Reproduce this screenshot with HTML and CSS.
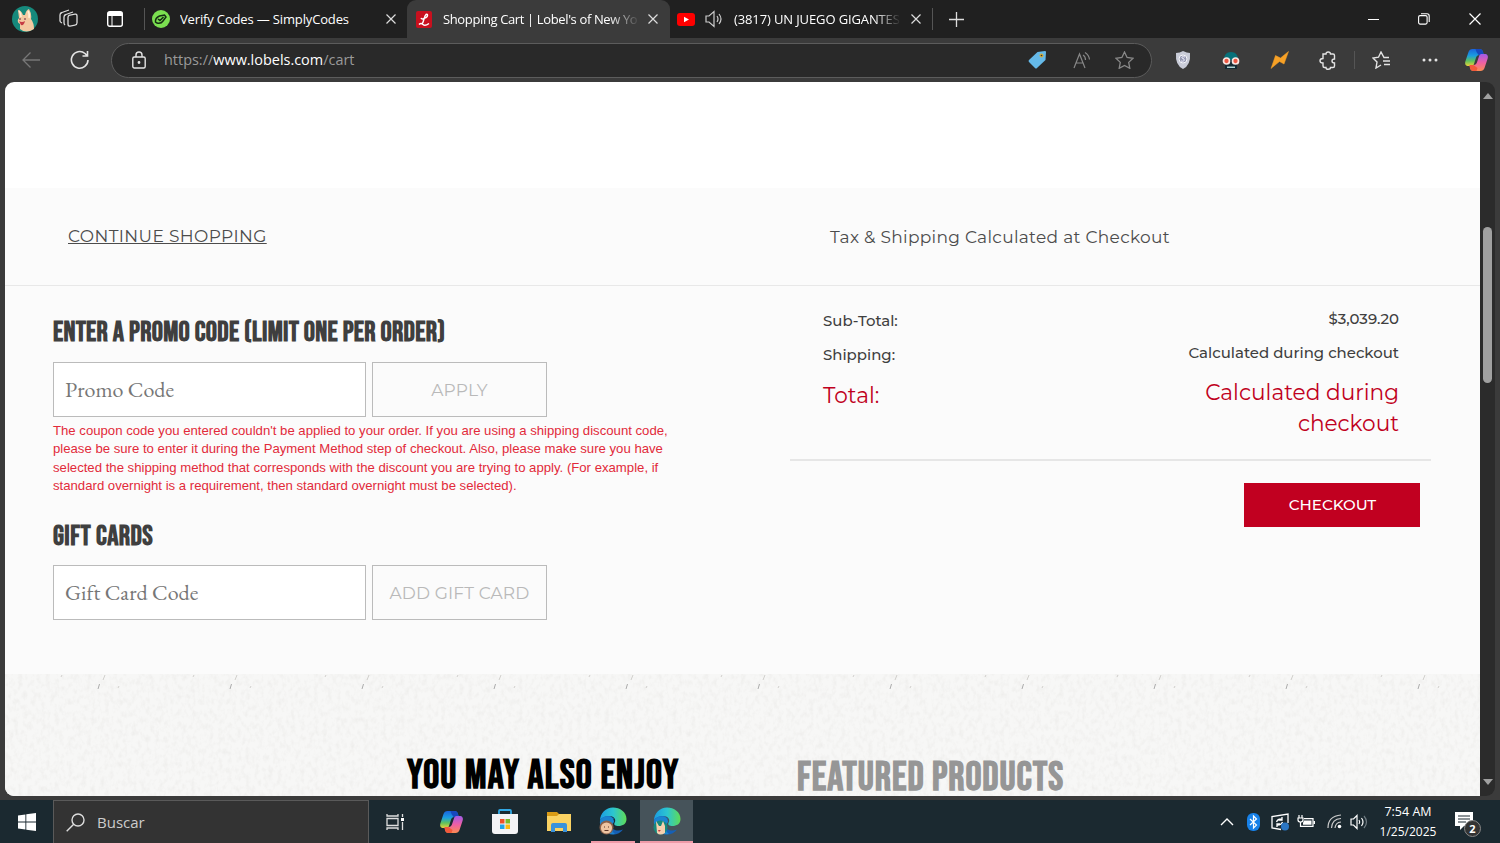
FILE: index.html
```html
<!DOCTYPE html>
<html lang="es">
<head>
  <meta charset="UTF-8" />
  <title>Shopping Cart | Lobel's of New York</title>
  <link rel="stylesheet" href="styles.css">
</head>
<body>

  <!-- Shared colours and logos -->
  <svg class="defs" width="0" height="0">
    <defs>
      <linearGradient id="gLeft" x1="0" y1="0" x2="0" y2="1">
        <stop offset="0" stop-color="#1a63dc"/><stop offset=".4" stop-color="#1a9ee0"/><stop offset=".7" stop-color="#5fc15c"/><stop offset="1" stop-color="#e8d23a"/>
      </linearGradient>
      <linearGradient id="gRight" x1="0" y1="0" x2="0" y2="1">
        <stop offset="0" stop-color="#a05be8"/><stop offset=".5" stop-color="#ee5fa5"/><stop offset="1" stop-color="#fb8b52"/>
      </linearGradient>
      <linearGradient id="gEdge" x1="0" y1="0" x2="1" y2="0">
        <stop offset="0" stop-color="#1b9de2"/><stop offset=".5" stop-color="#2cc5d0"/><stop offset="1" stop-color="#5fdc55"/>
      </linearGradient>
      <symbol id="copilot" viewBox="0 0 24 24">
        <path d="M8 1h7c2 0 3 1 3.500 3l.8 3H15c-2 0-3 1-3.600 3L9.500 16c-.6 1.500-1.500 2-3 2H4c-3 0-4-2-3-5L4 4c.7-2 2-3 4-3z" fill="url(#gLeft)"/>
        <path d="M11 1h4c2 0 3 1 3.500 3l.8 3H14L12 4z" fill="#1748bd"/>
        <path d="M16 23H9c-2 0-3-1-3.500-3L5 17h4c2 0 3-1 3.600-3l2-6c.5-1.500 1.400-2 3-2H20c3 0 4 2 3 5l-3 9c-.7 2-2 3-4 3z" fill="url(#gRight)"/>
        <path d="M12 23H9c-2 0-3-1-3.500-3L5 17h4l4 3z" fill="#f2593b"/>
      </symbol>
      <symbol id="edge" viewBox="0 0 28 28">
        <path d="M1 15c0 8 6 12.500 13 12.500 4 0 8-2 10-5-5 2-11 1-12-4-1-4 2-6 3-7L8 7C3 8 1 12 1 15z" fill="#1660b5"/>
        <path d="M1 14C1 6 7 .5 14 .5S27.500 5 27.500 12c0 5-4 7-8 7-3 0-5-1-4-3 2-3 0-7-5-7-5 0-9 2-9.500 5z" fill="url(#gEdge)"/>
        <path d="M1 14c2-6 14-7 14 1-3 3-4 8 1 12C7 29 0 22 1 14z" fill="#1b83d0"/>
      </symbol>
    </defs>
  </svg>

  <div class="tabbar">
    <svg class="avatar" width="26" height="26" viewBox="0 0 26 26">
      <circle cx="13" cy="13" r="13" fill="#16897c"/>
      <path d="M7 12 6 4q3 0 5 5h2q1-5 4-6 3 5 2 10 3 4 3 10-8 5-14 0v-5q-4-2-1-6z" fill="#f4c9a1"/>
      <path d="M7 5q2 2 2 6M16 5q2 3 1 7" stroke="#fff0da" stroke-width="1.500" fill="none"/>
      <path d="M7 15q3 2 6 0-1 5-4 4z" fill="#c63c45"/><circle cx="8" cy="13" r=".8" fill="#513"/><circle cx="13" cy="13" r=".8" fill="#513"/>
    </svg>
    <svg class="workspaces" width="20" height="20" viewBox="0 0 20 20" fill="none" stroke="#ddd" stroke-width="1.300">
      <rect x="9" y="6" width="9" height="11" rx="2" transform="skewY(-10) translate(0 2)"/>
      <path d="M6 16q-1-1-1-2V8q0-2 2-2.500L14 3M3 14q-2-1-2-2V6q0-2 2-2.500L10 1"/>
    </svg>
    <svg class="vertical-tabs" width="16" height="16" viewBox="0 0 16 16"><rect x=".7" y=".7" width="14.600" height="14.600" rx="2" fill="none" stroke="#fff" stroke-width="1.400"/><path d="M1 1h14v4H1z" fill="#fff"/><path d="M5 5v10" stroke="#fff"/></svg>
    <i class="divider"></i>
    <div class="tab tab-codes">
      <svg width="18" height="18" viewBox="0 0 18 18"><circle cx="9" cy="9" r="9" fill="#7be050"/><path d="M3.500 12q-.5-4 4-6l5-1 1.500 2-3 4q-2 3-6 2zM6 9l2 1.500L11.500 7" fill="none" stroke="#152c13" stroke-width="1.500"/></svg>
      <span class="tab-title">Verify Codes — SimplyCodes</span>
      <svg class="close" width="10" height="10"><path d="m.5.5 9 9m0-9-9 9"/></svg>
    </div>
    <div class="tab tab-cart">
      <svg width="16" height="17" viewBox="0 0 16 17"><rect width="16" height="17" rx="2" fill="#c8101e"/><path d="M3 13.500q2-2 4 0t6-1M6 13c2-2 2-8 4-9.500 2-1 2 2 0 3S6 9 5 7" fill="none" stroke="#fff" stroke-width="1.500"/></svg>
      <span class="tab-title fade">Shopping Cart | Lobel's of New Yo</span>
      <svg class="close" width="10" height="10"><path d="m.5.5 9 9m0-9-9 9"/></svg>
    </div>
    <div class="tab tab-video">
      <svg width="18" height="13" viewBox="0 0 18 13"><rect width="18" height="13" rx="3" fill="#f00"/><path d="m7 3.800 5 2.700-5 2.700z" fill="#fff"/></svg>
      <svg class="sound" width="18" height="18" viewBox="0 0 18 18" fill="none" stroke="#ccc" stroke-width="1.200"><path d="M1 6h3l5-4.500v15L4 12H1zM12 6q2 3 0 6M14 4q4 5 0 10"/></svg>
      <span class="tab-title fade">(3817) UN JUEGO GIGANTES</span>
      <svg class="close" width="10" height="10"><path d="m.5.5 9 9m0-9-9 9"/></svg>
    </div>
    <i class="divider"></i>
    <svg class="new-tab" width="15" height="15"><path d="M7.500 0v15M0 7.500h15" stroke="#ddd" stroke-width="1.300"/></svg>
    <div class="window-buttons">
      <svg width="11" height="12"><path d="M0 6.500h11" stroke="#fff"/></svg>
      <svg width="12" height="12" viewBox="0 0 12 12" fill="none" stroke="#fff" stroke-width="1.100"><rect x=".6" y="2.600" width="8.500" height="8.500" rx="1.500"/><path d="M3 .7h6q2.200 0 2.200 2.200V9"/></svg>
      <svg width="12" height="12"><path d="m.5.5 11 11m0-11-11 11" stroke="#fff" stroke-width="1.200"/></svg>
    </div>
  </div>

  <div class="toolbar">
    <svg class="back" width="18" height="16" viewBox="0 0 18 16" fill="none" stroke="#777" stroke-width="1.300"><path d="M18 8H1m7.500-7.500L1 8l7.500 7.500"/></svg>
    <svg class="reload" width="20" height="20" viewBox="0 0 20 20" fill="none" stroke="#e4e4e4" stroke-width="1.600"><path d="M18 10a8.300 8.300 0 1 1-3-6.500L17 5.500M17.500 1v5h-5"/></svg>
    <div class="address">
      <svg class="lock" width="14" height="18" viewBox="0 0 14 18" fill="none" stroke="#e4e4e4" stroke-width="1.400"><rect x=".8" y="6" width="12.400" height="11" rx="1.500"/><path d="M4 6V4q0-3 3-3t3 3v2"/><circle cx="7" cy="11.500" r=".7" fill="#fff"/></svg>
      <span class="url">https://<b>www.lobels.com</b>/cart</span>
      <svg class="tag" width="18" height="18" viewBox="0 0 18 18"><path d="M9.500 1 17 0q1 0 1 1l-.5 8L9 17q-1 1-2 0L1 11q-1-1 0-2z" fill="#65b9e8"/><circle cx="13.500" cy="4.500" r="2" fill="#d3ac3b"/><circle cx="13.500" cy="4.500" r=".8" fill="#333"/></svg>
      <svg class="read" width="18" height="17" viewBox="0 0 18 17" fill="none" stroke="#888" stroke-width="1.200"><path d="m1 16 5.500-14L12 16M3 11h7M10 3q2.500 1.500 2.500 5M12 .5q4 2.500 4.500 7"/></svg>
      <svg class="star" width="19" height="18" viewBox="0 0 19 18" fill="none" stroke="#888" stroke-width="1.300"><path d="m9.500 1 2.600 5.500 5.900.8-4.300 4.100 1.100 5.900-5.300-2.900-5.300 2.900 1.100-5.900L1 7.300l5.900-.8z"/></svg>
    </div>
    <div class="extensions">
      <svg class="shield" width="16" height="18" viewBox="0 0 16 18"><path d="M8 0q4 2 7 2 1 12-7 16Q0 14 1 2q4 0 7-2z" fill="#c9ccd8"/><circle cx="8" cy="8" r="4" fill="#9599b0" stroke="#f5f5fa"/><path d="M10 6q-4-1-3 1l2 1q1 3-3 2" fill="none" stroke="#eef" stroke-width="1"/></svg>
      <svg class="goggles" width="18" height="17" viewBox="0 0 18 17"><path d="M2 8Q2 0 9 0t7 8z" fill="#08717a"/><path d="M3 8h12v9H3z" fill="#132a34"/><path d="M5 14.500h8v1.500H5z" fill="#adced0"/><circle cx="4.500" cy="9" r="3" fill="#ec5743" stroke="#f8e6e2" stroke-width="1.700"/><circle cx="13.500" cy="9" r="3" fill="#ec5743" stroke="#f8e6e2" stroke-width="1.700"/></svg>
      <svg class="bolt" width="20" height="18" viewBox="0 0 20 18"><path d="M1 17.500 5.500 4.500l5 2.500L18.500.5 14 13l-4.500-2.500z" fill="#f7a126" stroke="#f7a126" stroke-width=".5"/></svg>
      <svg class="puzzle" width="18" height="19" viewBox="0 0 18 19" fill="none" stroke="#e4e4e4" stroke-width="1.400"><path d="M4 3h3q0-2 2.200-2t2.300 2H14q1.500 0 1.500 1.500V8q-2.500 0-2.500 2t2.500 2v3q0 1.500-1.500 1.500h-2.500q0 1.800-2.300 1.800T7 16.500H5.500Q4 16.500 4 15v-3q-3 0-3-2.200t3-2.300z"/></svg>
      <i class="divider"></i>
      <svg class="favs" width="19" height="18" viewBox="0 0 19 18" fill="none" stroke="#e4e4e4" stroke-width="1.400"><path d="M17 6.500h-5L9 1 6.500 6.200 1 7l4 4-1 6 5-3M11 10h7M12 13.500h6"/></svg>
      <svg class="dots" width="16" height="4" fill="#e4e4e4"><circle cx="2" cy="2" r="1.500"/><circle cx="8" cy="2" r="1.500"/><circle cx="14" cy="2" r="1.500"/></svg>
      <svg class="side" width="25" height="24"><use href="#copilot"/></svg>
    </div>
  </div>

  <div class="viewport">
    <main class="page">
      <div class="cart-top">
        <a class="continue">CONTINUE SHOPPING</a>
        <p class="tax">Tax &amp; Shipping Calculated at Checkout</p>
      </div>
      <div class="cart-body">
        <section class="codes">
          <h2>ENTER A PROMO CODE (LIMIT ONE PER ORDER)</h2>
          <div class="code-row">
            <div class="field">Promo Code</div>
            <div class="code-btn">APPLY</div>
          </div>
          <p class="error">The coupon code you entered couldn't be applied to your order. If you are using a shipping discount code,<br>please be sure to enter it during the Payment Method step of checkout. Also, please make sure you have<br>selected the shipping method that corresponds with the discount you are trying to apply. (For example, if<br>standard overnight is a requirement, then standard overnight must be selected).</p>
          <h2 class="gift-title">GIFT CARDS</h2>
          <div class="code-row">
            <div class="field">Gift Card Code</div>
            <div class="code-btn gift-btn">ADD GIFT CARD</div>
          </div>
        </section>
        <section class="summary">
          <div class="line"><span>Sub-Total:</span><span class="value">$3,039.20</span></div>
          <div class="line"><span>Shipping:</span><span class="value">Calculated during checkout</span></div>
          <div class="line total"><span>Total:</span><span class="value">Calculated during<br>checkout</span></div>
          <div class="checkout-row"><div class="checkout">CHECKOUT</div></div>
        </section>
      </div>
      <div class="products">
        <svg class="texture" width="1475" height="122">
          <filter id="grain" x="0" y="0" width="1" height="1"><feTurbulence type="fractalNoise" baseFrequency=".22 .16" numOctaves="3" seed="4"/><feColorMatrix values="0 0 0 0 .55  0 0 0 0 .53  0 0 0 0 .5  .35 0 0 0 -.15"/></filter>
          <pattern id="plaster" width="132" height="122" patternUnits="userSpaceOnUse">
            <path d="m93 15 1.500-5" stroke="#aaa" fill="none"/><path d="m56 3 1-2M98 6l2-5M113 14l1-2" stroke="#d0cecb" fill="none"/>
          </pattern>
          <rect width="1475" height="122" filter="url(#grain)"/>
          <rect width="1475" height="122" fill="url(#plaster)"/>
        </svg>
        <h3 class="enjoy">YOU MAY ALSO ENJOY</h3>
        <h3 class="featured">FEATURED PRODUCTS</h3>
      </div>
    </main>
    <div class="scrollbar">
      <svg width="10" height="6"><path d="M0 6 5 0l5 6z" fill="#a0a0a0"/></svg>
      <div class="thumb"></div>
      <svg class="down" width="10" height="6"><path d="m0 0 5 6 5-6z" fill="#a0a0a0"/></svg>
    </div>
  </div>

  <div class="taskbar">
    <div class="start"><svg width="18" height="18" viewBox="0 0 18 18" fill="#fff"><path d="m0 2.500 7.400-1v7.100H0zM8.300 1.300 18 0v8.600H8.300zM0 9.500h7.400v7.100l-7.400-1zM8.300 9.500H18V18l-9.700-1.300z"/></svg></div>
    <div class="search">
      <svg width="19" height="19" viewBox="0 0 19 19" fill="none" stroke="#ddd" stroke-width="1.400"><circle cx="12" cy="7" r="6"/><path d="m7.700 11.300-7 7"/></svg>
      <span>Buscar</span>
    </div>
    <div class="app task-view"><svg width="19" height="18" viewBox="0 0 19 18" fill="none" stroke="#ddd" stroke-width="1.300"><path d="M1 1v2h11V1M1 17v-2h11v2M1 5.500h11v7H1zM16.500 1v3M16.500 9v8"/><path d="M15 5h3v3h-3z" fill="#fff" stroke="none"/></svg></div>
    <div class="app copilot"><svg width="25" height="24"><use href="#copilot"/></svg></div>
    <div class="app store"><svg width="26" height="26" viewBox="0 0 26 26"><path d="M7 6V2q0-1 1-1h10q1 0 1 1v4" fill="none" stroke="#31a8e5" stroke-width="1.800"/><path d="M0 5h26v17q0 3-3 3H3q-3 0-3-3z" fill="#f3f3f5"/><path d="M8 10h4.500v4.500H8z" fill="#ee4f2a"/><path d="M13.500 10H18v4.500h-4.500z" fill="#7cb928"/><path d="M8 15.500h4.500V20H8z" fill="#21a3e8"/><path d="M13.500 15.500H18V20h-4.500z" fill="#fbb914"/></svg></div>
    <div class="app files"><svg width="24" height="20" viewBox="0 0 24 20"><path d="M0 0h10l2 2v4H0z" fill="#d99b16"/><path d="M0 4h10l2-2h12v17H0z" fill="#fad263"/><path d="M4 20v-7q0-2 2-2h12q2 0 2 2v7h-4v-4H8v4z" fill="#3a92dc"/></svg></div>
    <div class="app open edge-one"><svg width="28" height="28" viewBox="0 0 28 28"><use href="#edge"/><circle cx="7.500" cy="20.500" r="7" fill="#8a604a"/><circle cx="7.500" cy="21" r="5.600" fill="#eec4a2"/><path d="M5 20h1m3 0h1M5.500 23.500h4" stroke="#5b3427"/></svg></div>
    <div class="app open active"><svg width="28" height="28" viewBox="0 0 28 28"><use href="#edge"/><circle cx="7.500" cy="20.500" r="7" fill="#16897c"/><path d="m3 14 3 5h2l2-5 2 5v7q-5 3-8 0z" fill="#f6d0ae"/><path d="m5 23 3 0-2 2z" fill="#c63c45"/></svg></div>
    <div class="tray">
      <svg class="up" width="14" height="8"><path d="m1 7 6-6 6 6" fill="none" stroke="#fff" stroke-width="1.400"/></svg>
      <svg class="bt" width="13" height="18" viewBox="0 0 13 18"><rect width="13" height="18" rx="6" fill="#1781e8"/><path d="m3 6 6.500 6L6.500 15V3l3 3L3 12" fill="none" stroke="#fff" stroke-width="1.200"/></svg>
      <svg class="sync" width="19" height="18" viewBox="0 0 19 18" fill="none" stroke="#fff" stroke-width="1.300"><path d="M10 16.500 1 15V3.500L17 1v9M5.500 9q1-3 5-3M11 4v3H8M11.500 9q-1 3-5 3M6 14v-3h3"/><circle cx="14" cy="13.500" r="4" fill="#2b76c4" stroke="none"/></svg>
      <svg class="battery" width="18" height="13" viewBox="0 0 18 13" fill="none" stroke="#fff" stroke-width="1.200"><path d="M2 0v3m3-3v3M1 3h5v2q0 2-2.500 2T1 5zM3.500 7v4.400H16V3.600H7M17.400 6v3"/><path d="M7 5.500h7.500v4.300H6V8z" fill="#fff" stroke="none"/></svg>
      <svg class="wifi" width="15" height="15" viewBox="0 0 15 15" fill="none" stroke="#ccc" stroke-width="1.200"><path d="M1 14Q1 2 14 1M4.500 14Q5 5 14 4.500M8 14q.5-5.500 6-6"/><circle cx="12.500" cy="12.500" r="1.800" fill="#fff" stroke="none"/></svg>
      <svg class="vol" width="18" height="16" viewBox="0 0 18 16" fill="none" stroke="#fff" stroke-width="1.200"><path d="M1 5h2.500L7 1.500v13L3.500 11H1zM9 6q1.500 2 0 4M11.500 4q3 4 0 8"/><path d="M14 2q5 6 0 12" stroke="#6f7b82"/></svg>
      <div class="clock"><span class="time">7:54 AM</span><span>1/25/2025</span></div>
      <div class="notify"><svg width="18" height="18" viewBox="0 0 18 18"><path d="M0 0h18v14H9l-4 4v-4H0z" fill="#fff"/><path d="M3 4h12M3 7h12M3 10h8" stroke="#1b2930" stroke-width="1.200"/></svg><b>2</b></div>
    </div>
  </div>
</body>
</html>
```
FILE: styles.css
```css
* {
  box-sizing: border-box;
}
body {
  margin: 0;
  height: 843px;
  display: flex;
  flex-direction: column;
  overflow: hidden;
  background: #3b3b3b;
  font-family: "Open Sans", sans-serif;
  color: #fff;
}
svg {
  display: block;
  flex: none;
}
.defs {
  position: absolute;
}
span {
  white-space: nowrap;
}

/* Browser tabs */
.tabbar {
  height: 38px;
  flex: none;
  display: flex;
  align-items: center;
  background: #202020;
  padding-left: 12px;
}
.workspaces {
  margin-left: 21px;
}
.vertical-tabs {
  margin-left: 28px;
}
.divider {
  width: 1px;
  height: 22px;
  background: #555;
}
.tabbar > .divider {
  margin-left: 21px;
}
.tab {
  display: flex;
  align-items: center;
  height: 38px;
  font-size: 13px;
}
.tab-title {
  overflow: hidden;
}
.fade {
  -webkit-mask-image: linear-gradient(90deg, #000 84%, transparent);
  mask-image: linear-gradient(90deg, #000 84%, transparent);
}
.close {
  margin-left: auto;
  stroke: #ddd;
  stroke-width: 1.2;
  fill: none;
}
.tab-codes {
  width: 262px;
  padding: 0 11px 0 7px;
  letter-spacing: -.15px;
}
.tab-codes .tab-title {
  margin-left: 10px;
}
.tab-cart {
  width: 263px;
  padding: 0 12px 0 9px;
  background: #3b3b3b;
  border-radius: 9px 9px 0 0;
  letter-spacing: -.37px;
}
.tab-cart .tab-title {
  margin-left: 11px;
  width: 197px;
}
.tab-video {
  width: 262px;
  padding: 0 11px 0 7px;
  letter-spacing: -.12px;
}
.sound {
  margin-left: 10px;
}
.tab-video .tab-title {
  margin-left: 11px;
  width: 167px;
}
.tabbar > .tab-video + .divider {
  margin-left: 0;
}
.new-tab {
  margin-left: 16px;
}
.window-buttons {
  margin-left: auto;
  padding-right: 19px;
  display: flex;
  gap: 39px;
}

/* Address bar */
.toolbar {
  height: 44px;
  flex: none;
  display: flex;
  align-items: center;
  background: #3b3b3b;
  padding-left: 22px;
}
.reload {
  margin-left: 30px;
}
.address {
  width: 1041px;
  height: 35px;
  margin-left: 21px;
  border: 1px solid #5c5c5c;
  border-radius: 18px;
  background: #292929;
  display: flex;
  align-items: center;
  padding: 0 17px 0 20px;
}
.url {
  margin: -1px 0 0 18px;
  font-size: 14.45px;
  color: #9a9a9a;
}
.url b {
  color: #fff;
  font-weight: 400;
}
.tag {
  margin-left: auto;
}
.read {
  margin-left: 27px;
}
.star {
  margin-left: 24px;
}
.extensions {
  flex: 1;
  display: flex;
  align-items: center;
}
.shield {
  margin-left: 23px;
}
.goggles {
  margin-left: 31px;
}
.bolt {
  margin-left: 30px;
}
.puzzle {
  margin-left: 29px;
}
.extensions .divider {
  height: 18px;
  margin-left: 17px;
}
.favs {
  margin-left: 17px;
}
.dots {
  margin-left: 31px;
}
.side {
  margin-left: 26px;
}

/* Page */
.viewport {
  height: 714px;
  margin: 0 5px;
  flex: none;
  display: flex;
  overflow: hidden;
  border-radius: 9px;
}
.page {
  width: 1475px;
  background: #fff;
  padding-top: 106px;
  color: #3f3f3f;
  font-family: Montserrat, Inter, sans-serif;
}
.cart-top {
  height: 98px;
  display: flex;
  align-items: center;
  background: #fbfbfb;
  border-bottom: 1px solid #e8e8e8;
  font-size: 17px;
  letter-spacing: .3px;
  color: #4c4c4c;
}
.continue {
  width: 762px;
  margin-top: -2px;
  padding-left: 63px;
  text-decoration: underline;
  letter-spacing: .38px;
}
.cart-top .tax {
  margin: 0 0 0 63px;
}
.cart-body {
  height: 388px;
  display: flex;
  background: #fbfbfb;
}
.codes {
  width: 785px;
  padding: 30px 0 0 48px;
}
h2, h3 {
  margin: 0;
  font-family: "Bebas Neue", "Roboto Condensed", Roboto, sans-serif;
  font-weight: 700;
}
h2 {
  height: 32px;
  font-size: 28px;
  line-height: 34px;
  letter-spacing: .27px;
}
.gift-title {
  line-height: 36px;
  letter-spacing: .42px;
}
.code-row {
  display: flex;
  gap: 6px;
  margin-top: 14px;
}
.field, .code-btn {
  height: 55px;
  border: 1px solid #bbb;
  display: flex;
  align-items: center;
}
.field {
  width: 313px;
  padding-left: 11px;
  background: #fff;
  color: #777;
  font: 22px "EB Garamond", "Liberation Serif", serif;
}
.code-btn {
  width: 175px;
  justify-content: center;
  font-size: 17px;
  letter-spacing: .12px;
  color: #b9b9b9;
}
.gift-btn {
  padding-top: 2px;
}
.error {
  margin: 5px 0 23px;
  font: 13.17px/18.4px "Liberation Sans", sans-serif;
  color: #e22a3a;
  white-space: nowrap;
}
.summary {
  width: 641px;
  padding-top: 23px;
}
.line {
  display: flex;
  justify-content: space-between;
  height: 34px;
  padding: 0 32px 0 33px;
  font-size: 14.95px;
  font-weight: 500;
  line-height: 24px;
}
.line .value {
  margin-top: -2px;
  text-align: right;
}
.total {
  height: 84px;
  padding-top: 3px;
  font-size: 21.65px;
  font-weight: 400;
  line-height: 31px;
  color: #c00020;
}
.total .value {
  margin-top: -3px;
}
.checkout-row {
  margin-top: -2px;
  padding: 22px 11px 0 0;
  border-top: 2px solid #e6e6e6;
  display: flex;
  justify-content: flex-end;
}
.checkout {
  width: 176px;
  height: 44px;
  padding: 0 0 1px 1px;
  display: flex;
  align-items: center;
  justify-content: center;
  background: #c10020;
  color: #fff;
  font-size: 15.1px;
  font-weight: 500;
}
.products {
  height: 122px;
  position: relative;
  display: flex;
  background: #f7f7f6;
}
.texture {
  position: absolute;
}
h3 {
  position: relative;
  height: 40px;
  font-size: 40px;
  line-height: 40px;
}
.enjoy {
  width: 390px;
  margin: 82px 0 0 402px;
  letter-spacing: 1.15px;
  color: #000;
}
.featured {
  margin-top: 84px;
  height: 38px;
  letter-spacing: .95px;
  color: #969696;
}
.scrollbar {
  width: 15px;
  background: #2b2b2b;
  display: flex;
  flex-direction: column;
  align-items: center;
  padding: 11px 0;
}
.thumb {
  width: 9px;
  height: 156px;
  margin-top: 128px;
  border-radius: 5px;
  background: #a0a0a0;
}
.down {
  margin-top: auto;
}

/* Taskbar */
.taskbar {
  height: 43px;
  margin-top: 4px;
  flex: none;
  display: flex;
  background: #1b2930;
}
.start {
  width: 53px;
  padding: 13px 0 0 18px;
}
.search {
  width: 316px;
  border: 1px solid #5a5a5a;
  border-bottom: 0;
  background: #333;
  display: flex;
  align-items: center;
  padding-left: 12px;
  gap: 12px;
  font-size: 15px;
  color: #ccc;
}
.app {
  width: 54px;
  display: flex;
  align-items: center;
  justify-content: center;
}
.copilot {
  width: 59px;
}
.store {
  width: 47px;
}
.files {
  width: 62px;
}
.task-view {
  width: 53px;
}
.open {
  width: 53px;
  border-bottom: 2px solid #f09aa8;
}
.edge-one {
  width: 44px;
  margin: 0 5px 0 1px;
}
.active {
  background: #46535a;
}
.tray {
  margin-left: auto;
  display: flex;
  align-items: center;
  padding-right: 17px;
}
.bt {
  margin-left: 13px;
}
.sync {
  margin-left: 11px;
}
.battery {
  margin-left: 7px;
}
.wifi {
  margin-left: 12px;
}
.vol {
  margin-left: 8px;
}
.clock {
  width: 58px;
  margin-left: 11px;
  display: flex;
  flex-direction: column;
  align-items: center;
  font-size: 12px;
  line-height: 20px;
}
.time {
  font-size: 12.5px;
}
.notify {
  position: relative;
  width: 28px;
  height: 20px;
  margin-left: 18px;
}
.notify b {
  position: absolute;
  left: 9px;
  top: 8px;
  width: 17px;
  height: 17px;
  border: 1px solid #888;
  border-radius: 50%;
  background: #333;
  font-size: 11px;
  line-height: 15px;
  text-align: center;
}
```
